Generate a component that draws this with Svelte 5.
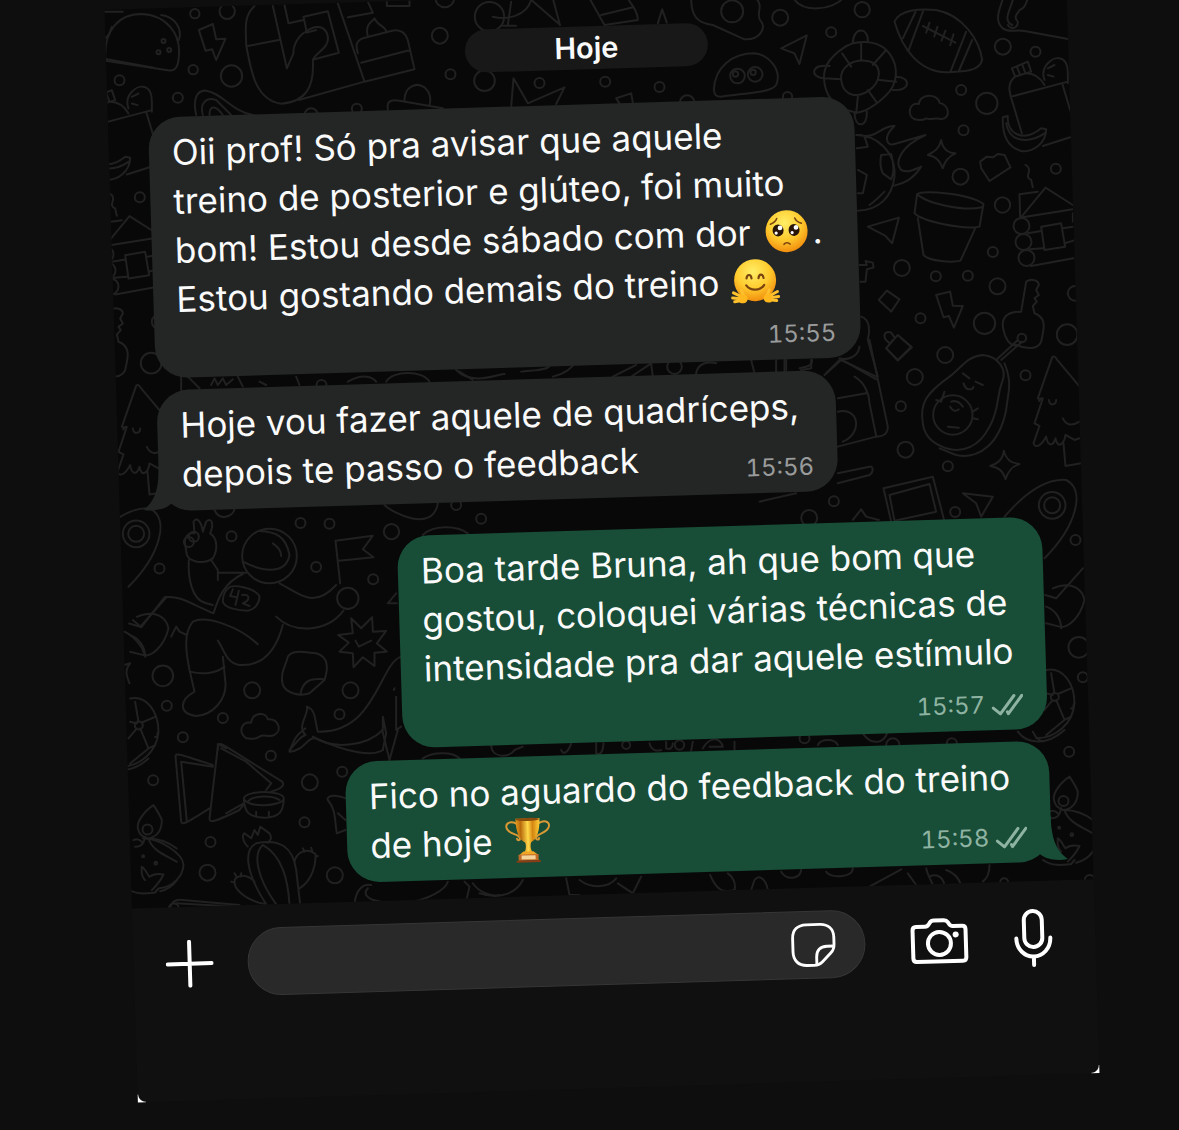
<script lang="ts">
	const messages = [
		{
			mine: false,
			stacked: true,
			tail: false,
			width: 80.1,
			time: '15:55',
			lines: [
				['Oii prof! Só pra avisar que aquele'],
				['treino de posterior e glúteo, foi muito'],
				['bom! Estou desde sábado com dor ', 'pleading', '.'],
				['Estou gostando demais do treino ', 'hug'],
			],
		},
		{
			mine: false,
			stacked: false,
			tail: true,
			width: 77.1,
			time: '15:56',
			lines: [['Hoje vou fazer aquele de quadríceps,'], ['depois te passo o feedback']],
		},
		{
			mine: true,
			stacked: true,
			tail: false,
			width: 73.2,
			time: '15:57',
			lines: [
				['Boa tarde Bruna, ah que bom que'],
				['gostou, coloquei várias técnicas de'],
				['intensidade pra dar aquele estímulo'],
			],
		},
		{
			mine: true,
			stacked: false,
			tail: true,
			width: 79.9,
			time: '15:58',
			lines: [['Fico no aguardo do feedback do treino'], ['de hoje ', 'trophy']],
		},
	];

	// Doodle wallpaper, split in regions drawn at three times their size
	const doodles = [
		{
			x: 100, y: 0,
			circles: [
				[286, 41, 14], [383, 34, 23], [281, 209, 14], [396, 228, 32], [235, 293, 15],
				[1021, 107, 24], [1053, 223, 15], [1155, 242, 31], [1170, 50, 44], [1036, -6, 28], [772, 326, 15],
				[192, 123, 6], [209, 150, 6], [177, 157, 6], [635, 345, 20],
			],
			paths: [
				'M18 182C10 90 60 42 125 42C200 45 245 100 238 170C236 200 228 215 205 211L18 182M185 45C225 50 250 85 238 120M15 35H70',
				'M298 90L340 72L350 118L378 116L350 180L338 148L318 152Z',
				'M465 18C430 50 440 90 440 135C455 220 470 300 545 311C620 305 645 260 640 180C650 155 690 145 685 110C680 80 650 70 620 95C590 110 580 145 582 160L562 205L520 18M445 138L538 120',
				'M555 15L567 70L612 60M612 50L685 34L718 158L645 178M612 50L622 98L650 90M715 10L795 245L945 208L925 120C915 90 895 88 875 93L790 115C770 122 768 135 775 160M745 52L820 38L805 5M785 188L932 150M805 110C795 70 820 65 825 55C840 85 850 70 862 95M598 300L795 245M862 -5V18H930V0',
				'M290 345C280 300 290 270 320 272C370 280 390 330 460 345M310 345C300 310 320 290 350 300L395 345M330 345C330 320 345 310 370 345',
				'M865 328C860 300 880 298 900 302L1030 325M915 300C915 260 950 245 975 262C995 280 995 300 990 318',
			],
		},
		{
			x: 440, y: 0,
			circles: [
				[300, 249, 15], [497, 245, 15], [660, 261, 15], [878, 34, 33], [894, 228, 22], [947, 223, 22],
				[888, 222, 8], [941, 217, 8], [743, 308, 22], [705, 1100, 22],
			],
			paths: [
				'M205 75L215 5M185 77H230M160 50C200 60 260 50 275 0M270 -5L362 75M340 -5L360 70M450 -5L495 75L595 60C595 30 575 15 565 -5M485 45L580 22M655 70L668 28L682 68',
				'M755 -5C755 50 775 70 820 75L915 118C965 120 980 80 965 65C945 45 975 20 950 -5M1025 145L1102 106L1080 192L1065 160Z',
				'M215 320L222 235L265 310L375 262L350 312M530 295L575 280L580 308M530 295L540 310',
				'M823 270C825 200 880 160 945 160C990 165 1025 210 1012 250C1005 275 960 275 845 290C830 290 825 285 823 270Z',
				'M1062 -5C1090 40 1180 30 1210 -5M50 1110C100 1160 180 1120 195 1122M245 1115C290 1110 330 1110 330 1095M340 1130C380 1120 400 1100 405 1090M520 1130L590 1095M560 1140L635 1090L640 1130M770 1140C765 1100 790 1080 830 1090M935 1080L945 1120M1010 1080V1120',
			],
		},
		{
			x: 780, y: 0, repeat: true,
			circles: [
				[2, 53, 24], [248, 29, 23], [155, 97, 15], [545, 270, 15], [622, 310, 32], [552, 391, 15], [543, 530, 24],
				[670, 140, 24], [768, 155, 15], [829, 506, 15], [669, 615, 23], [640, 756, 15], [367, 804, 24],
				[469, 829, 15], [565, 827, 15], [654, 859, 24], [615, 970, 32], [423, 955, 15],
				[863, 1004, 31], [887, 880, 22], [727, 1014, 13],
				[726, 678, 24], [732, 726, 24], [741, 774, 24], [24, 290, 14],
			],
			paths: [
				'M345 65C360 30 420 25 470 30C550 45 600 120 608 180C600 215 550 215 500 217C420 215 370 150 345 65ZM408 36L370 115M432 30L387 152M560 95L513 215M578 120L538 213M430 78L528 128M450 68L440 98M474 80L464 110M498 92L486 122M522 103L512 136',
				'M135 250C125 200 160 165 190 145C230 115 290 125 315 145C355 180 360 235 330 275C290 320 240 345 220 335C160 320 140 285 135 250ZM185 240C180 200 220 180 255 182C310 185 305 235 280 262C240 300 190 290 185 240ZM245 130V180M320 150L280 195M188 160L215 200M135 235L185 238M300 240L350 245M265 270L290 305M235 290L230 340M220 130C220 80 268 80 265 125M130 235C90 230 95 190 150 198M350 230C395 230 395 275 340 270M225 340C225 385 265 385 262 335',
				'M405 358C380 345 390 305 418 312C420 280 475 280 480 308C510 315 515 355 485 358C470 350 455 362 440 355C425 364 415 360 405 358Z',
				'M485 420C490 450 510 460 528 460C505 470 495 485 490 505C480 480 470 470 445 465C465 455 480 445 485 420Z',
				'M230 405C290 405 350 455 345 530C338 590 300 630 235 632M240 405C290 420 305 375 345 378C310 410 320 440 345 432L438 405C360 440 345 490 365 510C385 520 400 510 425 500C400 540 370 550 345 557M305 465L335 462C345 500 345 520 335 538L310 520C300 500 302 480 305 465ZM235 510L262 525L250 580H235M270 615C285 605 300 590 315 575M255 410L265 440L232 445',
				'M602 485L622 470L640 472L655 462L675 465L693 502L630 543L605 505Z',
				'M413 582C430 570 570 580 612 612L600 680C550 690 430 665 405 640ZM413 582C440 610 550 635 608 622M415 655L432 765C450 785 520 788 543 782L588 683',
				'M265 680L358 653L338 730L318 708ZM298 900L322 872L360 898L335 935ZM240 795H262L258 783L280 788L282 803L262 808L258 845H243M470 885L512 875L520 917L550 918L523 983L508 948L492 952Z',
				'M320 1045L355 1005L397 1042L355 1082ZM328 1028C305 1010 315 990 335 998L345 1012',
				'M670 85C640 60 665 20 670 -5M670 85C690 100 705 88 735 93L870 118M685 75C695 90 715 85 715 65C700 50 715 40 720 30C740 25 740 5 745 -5M698 75C670 60 690 35 700 0',
				'M697 205L745 185L755 215M697 205L707 230L755 215M712 200L722 225M728 193L738 220M707 230C680 250 690 280 700 310L727 400M695 290L865 245M740 220C760 220 780 230 795 255M795 240C780 200 820 170 840 175C870 180 865 220 865 250M805 205L825 195M805 225L822 230M848 250L875 340M790 438L872 412',
				'M670 352L685 348C680 400 730 430 785 385L800 388C800 430 760 458 725 453C680 440 668 400 670 352ZM680 370C690 430 750 430 795 400',
				'M738 495C765 510 730 530 755 540L760 562M722 655L798 563L880 615M730 652L880 628M722 655L720 583L775 575M745 700L785 693M750 748L790 745M755 798L882 775M785 680L845 670L857 740L795 750ZM850 685L880 680M855 730L882 722M880 640V665',
				'M672 990C660 940 700 935 725 935L740 845C755 835 778 840 778 855L770 870L778 885L765 895L772 905L760 918L765 940C805 955 792 990 785 1025C775 1050 740 1048 710 1035C690 1040 675 1010 672 990ZM715 1020L650 1080M728 1025L665 1080',
				'M245 950C275 960 270 1000 265 1020L295 1130M240 1040C235 1075 200 1080 180 1075L290 1138M180 1080L140 1120M20 1075V1110M60 1105C80 1100 98 1100 98 1080',
			],
		},
		{
			x: 100, y: 370,
			circles: [
				[603, 459, 15], [690, 461, 15], [876, 485, 23], [1145, 446, 15], [1070, 405, 15],
				[396, 499, 15], [650, 591, 15], [821, 628, 15], [458, 961, 24], [753, 961, 24], [370, 1044, 15],
				[720, 1033, 15], [510, 558, 82], [745, 685, 32], [666, 45, 15], [283, 500, 15], [268, 516, 15],
			],
			paths: [
				'M258 530C250 500 270 485 285 490L282 455C290 440 305 450 310 485L320 455C335 440 345 460 332 490C355 505 355 540 340 565C310 585 270 575 262 555ZM268 570C265 620 275 690 320 700L340 705M335 570L355 600V630M355 608H440M430 612C370 640 355 690 342 730C270 700 240 675 195 682L125 772L100 750',
				'M430 575C500 610 560 610 570 555C560 500 530 485 480 483M520 520C535 530 545 545 545 558',
				'M385 655C400 640 470 655 480 680C480 700 465 720 445 722C420 722 375 715 370 695C370 680 375 665 385 655ZM400 658L392 678L412 682M418 662L408 705M428 675C450 670 455 690 430 700L450 708',
				'M540 640C600 670 640 720 710 645M530 740C580 790 680 790 732 722M550 765C530 840 490 890 420 885C380 880 375 840 355 812M475 823C420 770 320 735 280 755C250 790 260 850 270 900L285 965C240 990 235 1030 290 1038C340 1035 380 990 378 940L370 860M272 905C310 915 350 910 375 890M215 800L230 770L240 785L262 795M75 785C105 800 130 830 135 855',
				'M708 512L820 497L790 538L822 562L718 572M708 512L722 640',
				'M755 745L785 775L818 742L820 785L860 783L832 820L862 845L825 848L825 888L790 862L762 892L760 850L720 845L748 818L716 795L760 790ZM768 812L778 830L815 812',
				'M565 860C580 840 600 845 650 850C690 860 685 900 675 930L630 970C600 980 560 970 550 945C540 910 560 885 565 860ZM603 972C610 930 635 925 672 928',
				'M440 1105C415 1085 425 1055 455 1058C460 1025 500 1025 505 1048C535 1045 550 1080 525 1095C505 1105 495 1090 480 1100C460 1112 450 1105 440 1105Z',
				'M905 860C840 880 830 1090 655 1085C645 1050 650 1020 622 1010C630 1030 590 1070 618 1095C600 1100 590 1120 570 1140M640 1100C700 1140 800 1130 850 1080V1040L860 1090L850 1140M885 955L883 960M890 980V1080L905 1070M865 700L890 670M870 700H892M355 1140V1122L380 1135',
				'M345 420C360 455 400 440 405 418M855 405C880 430 1000 490 1015 400M970 495C1000 465 1070 465 1105 490M245 20V60M265 20L300 55M335 45L345 25L355 45L370 25L380 45L400 28M415 20L430 50M480 35L500 45M590 20L600 45M745 35C790 10 820 20 830 35M860 35C880 0 970 0 990 35M1080 5L1120 30',
				'M75 885L92 880C75 900 80 915 90 940',
			],
		},
		{
			x: 760, y: 340, repeat: true,
			circles: [
				[557, 45, 24], [466, 111, 24], [424, 199, 15], [798, 106, 15], [438, 329, 24], [565, 379, 15],
				[223, 484, 15], [587, 516, 15], [149, 534, 24], [878, 496, 40], [878, 496, 24], [948, 600, 15],
				[958, 922, 31], [970, 1012, 15], [886, 1071, 12], [580, 225, 59],
			],
			paths: [
				'M490 250C480 190 500 160 570 110C610 80 620 50 670 45C720 50 740 90 730 120C710 170 720 210 690 260C660 320 610 340 560 325C520 310 495 290 490 250ZM735 70C760 130 745 160 740 210C720 310 660 360 590 345L540 325M610 100L630 115M648 125L670 135M612 130C620 155 640 150 642 140M530 180L545 185L555 155M640 215L655 205M640 235L655 238M565 260L598 263M575 185C590 180 600 185 610 200M572 200C580 215 590 215 598 208',
				'M845 175C830 190 850 180 835 175L878 52C885 45 890 55 895 62L965 145M850 175L825 250L840 258L822 310C830 330 850 310 860 290C865 320 880 320 888 295C895 330 915 310 918 285L945 300L960 295M868 180C870 200 890 195 890 180M910 235C920 255 935 260 960 245M912 310L918 378L965 370',
				'M733 332C740 360 755 370 780 372C755 380 745 395 738 418C730 390 715 382 692 378C715 370 730 360 733 332Z',
				'M372 445L520 410L555 545M372 445L395 545M390 465L510 432L530 515L405 542ZM610 460L700 470L665 530L650 490ZM280 540L305 508L320 530L358 540',
				'M735 530C800 455 860 415 920 420C980 450 950 560 855 655M857 765L890 775L970 685M880 745C940 720 970 750 975 780C960 840 920 865 900 860L860 850M860 800C890 810 905 840 905 865',
				'M195 105L245 60L350 110M285 110C320 130 330 170 330 190L350 288M330 0L385 260C385 280 375 288 350 290L235 320M235 175L320 160M235 215C300 200 310 280 250 305M235 400L330 380C345 378 340 400 330 405L235 430M0 485L110 460M380 25L415 60L455 20L425 -5M380 25L400 0M75 60V95M125 90L155 85V60',
				'M860 990C910 980 945 1030 945 1090C940 1150 890 1195 830 1195M860 1060L880 1065M895 1062L935 1045M890 1080L915 1140L935 1130M880 1080L855 1110M915 1140L860 1185M875 1000L885 1060M935 1105C945 1110 940 1090 945 1090',
			],
		},
		{
			x: 100, y: 730,
			circles: [
				[250, 22, 15], [514, 77, 15], [631, 157, 24], [728, 125, 15], [615, 277, 15],
				[333, 336, 15], [324, 428, 24], [706, 436, 24],
			],
			paths: [
				'M228 78C230 68 240 72 340 105M228 78L245 275C248 285 255 283 330 235M245 95L262 275M245 95L340 110M355 50C358 38 365 40 380 50L548 155C555 165 550 175 515 185M355 50L330 265C330 280 340 278 420 240L432 225M365 55L440 95L515 160L500 180M380 250L430 222',
				'M433 205C440 180 550 180 553 205C550 230 440 235 433 205ZM433 205C435 245 445 262 495 263C540 262 552 245 553 205M445 215C460 195 520 195 540 210M470 245V258M508 245V258',
				'M500 523C440 430 430 360 470 340C540 325 580 350 590 420L602 523M570 523C565 450 550 380 490 345C460 370 470 440 530 523M445 350C425 330 430 310 435 310L455 325L465 300L475 315L482 290L510 310C520 325 510 335 505 338M600 475C640 450 650 400 648 372C620 350 590 370 585 395M610 355L615 365M635 353L638 363M655 378L648 380M500 523C430 510 395 470 408 445C430 430 450 440 465 455M405 430L412 442M425 430L423 440M395 455L405 458',
				'M570 65C590 10 600 10 618 -5M570 65C620 60 620 20 650 25C750 70 820 80 850 60M848 0L870 90L895 0M740 205C700 190 680 200 685 210C710 240 705 270 712 310L738 300M715 250L738 270M212 535C215 515 230 508 250 510L420 525M230 520L410 530M765 520C770 480 790 460 815 465M845 515C800 510 790 490 805 475M935 515C980 510 1040 480 1045 455M1095 455L1110 470L1100 515M1120 460C1140 490 1180 500 1200 495M970 85C1000 65 1060 65 1080 85',
				'M130 325C180 325 250 370 252 405C250 440 220 470 180 475',
			],
		},
		{
			x: 760, y: 730, repeat: true,
			circles: [[929, 65, 15], [899, 293, 3], [937, 314, 4], [991, 450, 15], [734, 457, 12], [912, 213, 15], [135, 25, 15], [400, 45, 20], [577, 40, 15]],
			paths: [
				'M930 140C900 160 875 195 885 215C890 235 905 235 910 240C935 240 955 220 955 185C950 170 940 155 930 140ZM905 235C900 260 890 265 875 265M915 240C950 240 980 255 1000 270M915 240C925 275 965 290 1000 310M870 245C880 240 890 245 895 250M905 365C890 350 895 335 895 325C905 330 910 345 918 355C930 345 945 345 960 348C950 370 935 385 925 395M850 390C880 410 910 405 935 402L945 390M1000 365C990 380 970 395 950 398',
				'M775 5C800 40 860 50 915 0M820 5C830 30 850 35 850 35M175 45C185 25 225 25 235 45M310 10C330 40 370 50 385 5M330 470L425 418M445 430L470 465M500 415C505 440 515 450 520 465M510 440C530 430 550 440 555 465M560 420C590 430 600 450 605 465M670 455C690 440 690 410 690 405M65 425C80 450 120 450 125 420M200 425C210 445 280 445 280 415',
			],
		},
		{
			x: 480, y: 730,
			circles: [[600, 45, 14], [440, 45, 12]],
			paths: [
				'M35 45C35 85 90 85 105 60L130 50M245 60C250 75 265 70 275 40M350 40V70C360 75 370 70 372 40M510 40C515 60 530 65 545 60M560 35V55C570 60 580 55 580 40M640 35L635 62M670 55C690 20 720 20 730 50H690M765 35V60M0 490C60 510 110 490 130 450M260 445L270 495H300M300 450C340 480 390 470 410 445M415 460L460 490L485 440M692 435C710 480 730 490 765 480C770 460 760 440 745 430M815 480L825 450C840 430 860 450 865 480',
			],
		},
	];
</script>

<svelte:head>
	<title>Hoje</title>
</svelte:head>

{#snippet scene(d)}
	<g transform="translate({d.x} {d.y}) scale(0.3333)">
		{#each d.circles as [cx, cy, r]}
			<circle {cx} {cy} {r} />
		{/each}
		{#each d.paths as path}
			<path d={path} />
		{/each}
	</g>
{/snippet}

{#snippet emoji(name)}
	{#if name === 'pleading'}
		<svg class="emoji" viewBox="0 0 46 46" role="img" aria-label="🥺">
			<circle cx="23" cy="23" r="21" fill="url(#skin)" />
			<ellipse cx="14.500" cy="22" rx="5.500" ry="6" fill="#2a1509" />
			<ellipse cx="30.500" cy="22" rx="5.500" ry="6" fill="#2a1509" />
			<circle cx="16.500" cy="19.500" r="2.400" fill="#fff" />
			<circle cx="32.500" cy="19.500" r="2.400" fill="#fff" />
			<circle cx="12.500" cy="24.500" r="1.600" fill="#fff" />
			<circle cx="28.500" cy="24.500" r="1.600" fill="#fff" />
			<g fill="none" stroke="#7a4410" stroke-width="1.600" stroke-linecap="round">
				<path d="M7 15.500C10 14.500 12.500 12.500 13.500 10" />
				<path d="M31.500 10C32.500 12.500 35 14.500 38 15.500" />
				<path d="M20 36C21.500 34 24.500 34 26 36" />
			</g>
		</svg>
	{:else if name === 'hug'}
		<svg class="emoji" viewBox="0 0 46 46" role="img" aria-label="🤗">
			<circle cx="23" cy="22" r="21" fill="url(#skin)" />
			<g fill="none" stroke="#7a4410" stroke-width="2.200" stroke-linecap="round">
				<path d="M14.500 20C15 15.500 19 15.500 19.500 20" />
				<path d="M26.500 20C27 15.500 31 15.500 31.500 20" />
				<path d="M14 27C18 33 28 33 32 27" />
			</g>
			<g fill="none" stroke="#ffc02e" stroke-width="3" stroke-linecap="round">
				<path d="M1 34L9 38M0 39L8 40M2 43L9 42M9 32L12 39" />
				<path d="M45 34L37 38M46 39L38 40M44 43L37 42M37 32L34 39" />
			</g>
			<path d="M7 37C10 35 15 36 15 40C15 44 11 46 7 44Z" fill="#ffb91f" />
			<path d="M39 37C36 35 31 36 31 40C31 44 35 46 39 44Z" fill="#ffb91f" />
		</svg>
	{:else}
		<svg class="emoji" viewBox="0 0 46 46" role="img" aria-label="🏆">
			<g fill="none" stroke="#d99a35" stroke-width="2" stroke-linecap="round">
				<path d="M12 6C4 2 -1 7 3 12C6 17 14 16 15 21C15 23 12 23 12 21" />
				<path d="M34 6C42 2 47 7 43 12C40 17 32 16 31 21C31 23 34 23 34 21" />
			</g>
			<path d="M11 1H35C35 14 32 22 26 25C25 28 25 31 27 35H19C21 31 21 28 20 25C14 22 11 14 11 1Z" fill="url(#gold)" />
			<ellipse cx="23" cy="2" rx="12" ry="1.500" fill="#8a4c0c" />
			<path d="M18 34H28L33 38H13Z" fill="#f0a627" />
			<path d="M13 37H33V43H13Z" fill="#c06b28" />
			<path d="M16 38H30V42H16Z" fill="#f4d39a" />
			<path d="M11 43H35V45H11Z" fill="#8c3d14" />
		</svg>
	{/if}
{/snippet}

<svg class="defs" aria-hidden="true">
	<defs>
		<radialGradient id="skin" cx="0.45" cy="0.3" r="0.72">
			<stop offset="0" stop-color="#ffee66" />
			<stop offset="0.55" stop-color="#ffcb2e" />
			<stop offset="1" stop-color="#f08a0c" />
		</radialGradient>
		<linearGradient id="gold">
			<stop offset="0" stop-color="#e89b1c" />
			<stop offset="0.2" stop-color="#b76a0c" />
			<stop offset="0.5" stop-color="#ffd94a" />
			<stop offset="0.7" stop-color="#d58510" />
			<stop offset="1" stop-color="#ffcf3a" />
		</linearGradient>
	</defs>
</svg>

<div class="page">
	<main class="phone">
		<section class="chat">
			<svg class="wallpaper" viewBox="0 0 962 900" preserveAspectRatio="xMidYMin slice" aria-hidden="true">
				<g transform="translate(481 547) rotate(1.75) translate(-602.5 -542)">
					{#each doodles as d}
						{@render scene(d)}
						{#if d.repeat}
							<g transform="translate(-916 28.5)">{@render scene(d)}</g>
						{/if}
					{/each}
				</g>
			</svg>

			<div class="day">Hoje</div>

			<div class="messages">
				{#each messages as m}
					<article class="bubble" class:mine={m.mine} class:stacked={m.stacked} style="width: {m.width}%">
						<p>
							{#each m.lines as line, i}
								{#if i > 0}<br />{/if}
								{#each line as part, j}{#if j === 1}{@render emoji(part)}{:else}{part}{/if}{/each}
							{/each}
						</p>
						<div class="meta">
							<time>{m.time}</time>
							{#if m.mine}
								<svg class="checks" viewBox="0 0 32 22" role="img" aria-label="Entregue">
									<path d="M2 14L9 20L23 2M16 18L17 20L31 2" />
								</svg>
							{/if}
						</div>
						{#if m.tail}
							<svg class="tail" viewBox="0 0 40 46" aria-hidden="true">
								<path d="M24 0C24 22 28 35 40 44C30 46 19 44 13 39L0 30L10 0Z" />
							</svg>
						{/if}
					</article>
				{/each}
			</div>
		</section>

		<form class="composer">
			<button type="button" class="plus" aria-label="Anexar">
				<svg viewBox="0 0 48 48"><path d="M24 2V46M2 24H46" /></svg>
			</button>
			<div class="field">
				<input type="text" aria-label="Mensagem" />
				<button type="button" class="sticker" aria-label="Figurinhas">
					<svg viewBox="0 0 48 48">
						<path d="M17 3H31C40 3 45.500 8 45.500 17V24C45.500 28 44 31 42 33L33 42C31 44 28 45.500 24 45.500H17C8 45.500 2.500 40 2.500 31V17C2.500 8 8 3 17 3Z" />
						<path d="M45 26H38C31 26 27 30 27 37V45" />
					</svg>
				</button>
			</div>
			<div class="actions">
				<button type="button" class="camera" aria-label="Câmera">
					<svg viewBox="0 0 60 48">
						<path d="M7 9.500H16C18 9.500 19 9 20 7L21 5.500C22 4 23 3.500 25 3.500H35C37 3.500 38 4 39 5.500L40 7C41 9 42 9.500 44 9.500H53C55.500 9.500 56.500 10.500 56.500 13V41C56.500 43.500 55.500 44.500 53 44.500H7C4.500 44.500 3.500 43.500 3.500 41V13C3.500 10.500 4.500 9.500 7 9.500Z" />
						<circle cx="30" cy="26.500" r="11.500" />
						<circle class="dot" cx="46.500" cy="18" r="3" />
					</svg>
				</button>
				<button type="button" class="mic" aria-label="Gravar áudio">
					<svg viewBox="0 0 40 60">
						<rect x="11" y="3" width="18" height="36" rx="9" />
						<path d="M3 30C3 41 11 48.500 20 48.500S37 41 37 30M20 48.500V57" />
					</svg>
				</button>
			</div>
		</form>
	</main>
</div>

<style>
	:global(body) { margin: 0; background: #0e0e0e; }

	.defs { position: absolute; width: 0; height: 0; }

	.page {
		display: flex;
		min-height: 100vh;
		box-sizing: border-box;
		padding: 0 96px 0 121px;
		overflow: hidden;
		font-family: Inter, "Liberation Sans", sans-serif;
		color: #fafafa;
	}

	.phone {
		flex: 1;
		min-width: 0;
		align-self: flex-start;
		position: relative;
		margin-top: -5px;
		background: #101010;
		transform: rotate(-1.75deg);
	}
	.phone::before, .phone::after {
		content: '';
		position: absolute;
		bottom: 0;
		width: 8px;
		height: 8px;
	}
	.phone::before { left: 0; background: radial-gradient(circle at 100% 0, transparent 7px, #fff 8px); }
	.phone::after { right: 0; background: radial-gradient(circle at 0 0, transparent 7px, #fff 8px); }

	/* CHAT */
	.chat {
		position: relative;
		padding: 31px 41px 19px 40px;
		background: #080808;
	}
	.wallpaper {
		position: absolute;
		inset: 0;
		width: 100%;
		height: 100%;
		fill: none;
		stroke: #212121;
		stroke-width: 6;
		stroke-linecap: round;
		stroke-linejoin: round;
	}

	.day {
		position: relative;
		width: 243px;
		margin: 0 auto 35px;
		border-radius: 22px;
		background: #181818;
		text-align: center;
		font-size: 29px;
		line-height: 43px;
		font-weight: 600;
	}

	.messages {
		position: relative;
		display: flex;
		flex-direction: column;
		gap: 12px;
	}
	.bubble {
		position: relative;
		display: grid;
		box-sizing: border-box;
		padding: 11px 24px 12px 23px;
		border-radius: 32px;
		background: #242626;
		fill: #242626;
	}
	.bubble.mine { align-self: flex-end; background: #184d37; fill: #184d37; }
	.bubble:not(.mine) + .mine { margin-top: 20px; }
	.bubble p {
		grid-area: 1 / 1;
		margin: 0;
		font-size: 35px;
		line-height: 49px;
		white-space: nowrap;
	}
	.meta {
		grid-area: 1 / 1;
		place-self: end;
		display: flex;
		align-items: center;
		gap: 6px;
		font-size: 24px;
		line-height: 27px;
		font-variant-numeric: tabular-nums;
		color: #9a9b9b;
	}
	.stacked .meta { grid-area: 2 / 1; margin-top: 15px; }
	.mine .meta { color: #8fb3a2; }
	.checks {
		width: 32px;
		height: 22px;
		fill: none;
		stroke: currentColor;
		stroke-width: 3;
		stroke-linecap: round;
		stroke-linejoin: round;
	}
	.tail {
		position: absolute;
		bottom: 0;
		left: -16px;
		width: 40px;
		height: 46px;
		transform: scaleX(-1);
	}
	.mine .tail { left: auto; right: -16px; transform: none; }
	.emoji {
		width: 46px;
		height: 46px;
		margin: -8px 3px;
		vertical-align: -2px;
		overflow: visible;
	}

	/* COMPOSER */
	.composer {
		display: flex;
		align-items: center;
		gap: 34px;
		padding: 23px 42px 103px 32px;
	}
	.composer button {
		display: block;
		flex-shrink: 0;
		padding: 0;
		border: none;
		background: none;
	}
	.composer svg {
		display: block;
		width: 100%;
		fill: none;
		stroke: #fff;
		stroke-width: 4;
		stroke-linecap: round;
		stroke-linejoin: round;
	}
	.plus { width: 48px; }
	.field {
		flex: 1;
		min-width: 0;
		display: flex;
		align-items: center;
		height: 68px;
		box-sizing: border-box;
		padding: 0 28px 0 30px;
		border: 1px solid #363636;
		border-radius: 34px;
		background: #292929;
	}
	.field input {
		flex: 1;
		min-width: 0;
		height: 48px;
		padding: 0;
		border: none;
		outline: none;
		background: transparent;
		color: inherit;
		font: inherit;
		font-size: 35px;
	}
	.sticker { width: 46px; }
	.composer .sticker svg { stroke-width: 3; }
	.actions { display: flex; align-items: center; gap: 44px; margin-left: 10px; }
	.camera { width: 60px; }
	.composer .camera .dot { fill: #fff; stroke: none; }
	.mic { width: 40px; }
</style>
